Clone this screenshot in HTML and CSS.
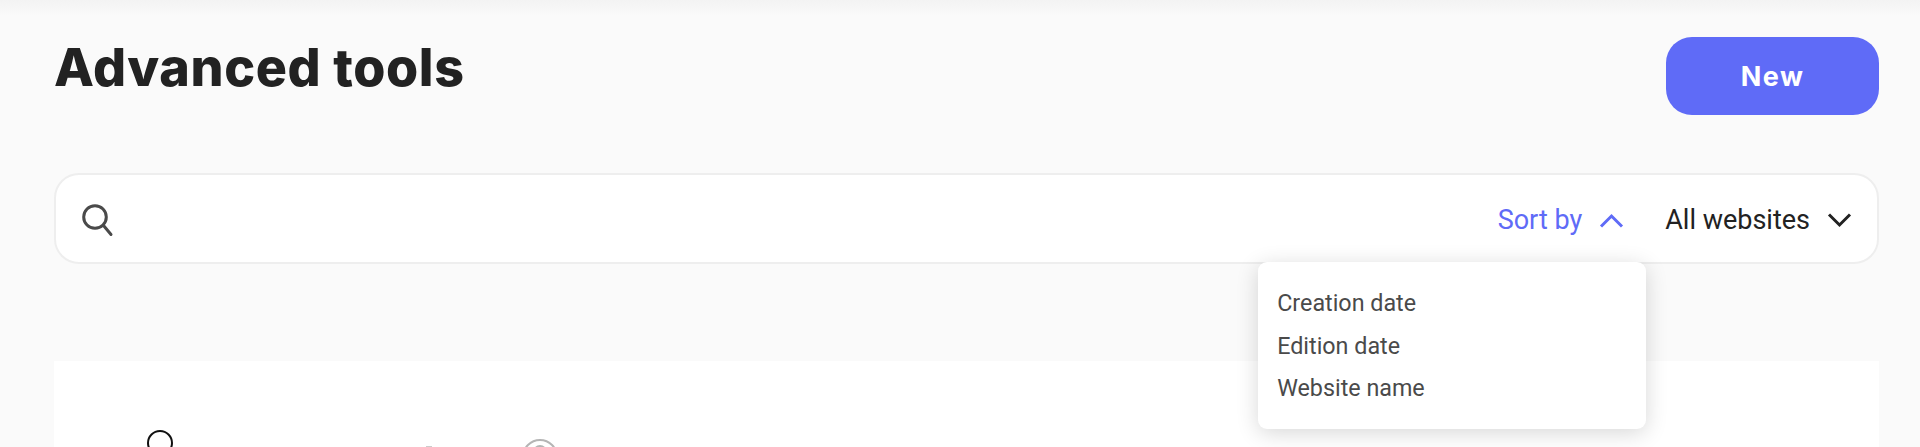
FILE: index.html
```html
<!DOCTYPE html>
<html lang="en">
<head>
  <meta charset="UTF-8" />
  <title>Advanced tools</title>
  <link rel="stylesheet" href="styles.css">
</head>
<body>

  <div class="page">
    <div class="header">
      <h1>Advanced tools</h1>
      <button class="btn-new">New</button>
    </div>

    <div class="toolbar">
      <svg class="icon-search" width="32" height="33" viewBox="0 0 32 33" fill="none" stroke="#4a4a4a" stroke-width="3" stroke-linecap="round">
        <circle cx="13" cy="13" r="11.3" />
        <line x1="21.5" y1="21.5" x2="29" y2="30.5" />
      </svg>

      <div class="sort">
        <span class="sort-label">Sort by</span>
        <svg class="chevron" width="25" height="15" viewBox="0 0 25 15" fill="none" stroke="#5f6bf7" stroke-width="3">
          <polyline points="2,13.5 12.5,3 23,13.5" />
        </svg>

        <ul class="sort-menu">
          <li>Creation date</li>
          <li>Edition date</li>
          <li>Website name</li>
        </ul>
      </div>

      <div class="websites">
        <span>All websites</span>
        <svg class="chevron" width="25" height="15" viewBox="0 0 25 15" fill="none" stroke="#222222" stroke-width="3">
          <polyline points="2,1.5 12.5,12 23,1.5" />
        </svg>
      </div>
    </div>

    <div class="card">
      <span class="ring ring-dark"></span>
      <span class="tick"></span>
      <span class="ring ring-light"><span class="ring ring-inner"></span></span>
    </div>
  </div>

</body>
</html>
```

FILE: styles.css
```css
/* Base */
* {
  margin: 0;
  padding: 0;
  box-sizing: border-box;
}

html, body {
  height: 100%;
  overflow: hidden;
}

body {
  font-family: 'Roboto', sans-serif;
  color: #222222;
  background: linear-gradient(#f3f3f3, #fafafa 16px);
}

.page {
  padding: 37px 41px 0 54px;
}

/* Title and button */
.header {
  display: flex;
  justify-content: space-between;
  align-items: flex-start;
}

h1 {
  font-family: 'Inter', sans-serif;
  font-size: 52px;
  font-weight: 800;
  line-height: 62px;
  letter-spacing: 0.6px;
  color: #222222;
}

.btn-new {
  width: 213px;
  height: 78px;
  background-color: #5f6bf7;
  color: white;
  font-family: 'Inter', sans-serif;
  font-size: 27px;
  font-weight: 700;
  letter-spacing: 1.5px;
  border: none;
  border-radius: 26px;
}

/* Search bar */
.toolbar {
  display: flex;
  align-items: center;
  height: 91px;
  margin-top: 58px;
  padding: 3px 25px 0 26px;
  background-color: white;
  border: 2px solid #eeeeee;
  border-radius: 25px;
  font-size: 27px;
}

.icon-search {
  margin-right: auto;
}

.sort {
  position: relative;
  display: flex;
  align-items: center;
  gap: 17px;
  margin-right: 41px;
  color: #5f6bf7;
}

.websites {
  display: flex;
  align-items: center;
  gap: 17px;
}

.chevron {
  display: block;
}

/* Dropdown */
.sort-menu {
  position: absolute;
  top: 58px;
  right: -22px;
  width: 388px;
  height: 167px;
  padding: 20px 19px;
  list-style: none;
  background-color: white;
  border-radius: 9px;
  box-shadow: 0 4px 22px rgba(0, 0, 0, 0.16);
  color: #4a4a4a;
  font-size: 23.3px;
  line-height: 42.7px;
  z-index: 10;
}

/* Card cut off by the bottom of the window */
.card {
  display: flex;
  align-items: flex-start;
  height: 200px;
  margin-top: 97px;
  padding: 69px 0 0 93px;
  background-color: white;
}

.ring {
  display: block;
  border-radius: 50%;
}

.ring-dark {
  width: 26px;
  height: 26px;
  border: 2.5px solid #111111;
}

.tick {
  width: 6px;
  height: 2px;
  margin: 16px 0 0 253px;
  background-color: #cccccc;
}

.ring-light {
  display: flex;
  justify-content: center;
  width: 36px;
  height: 36px;
  margin: 9px 0 0 90px;
  border: 2px solid #b5b5b5;
}

.ring-inner {
  width: 14px;
  height: 14px;
  margin-top: 4px;
  border: 2px solid #b5b5b5;
}
```
